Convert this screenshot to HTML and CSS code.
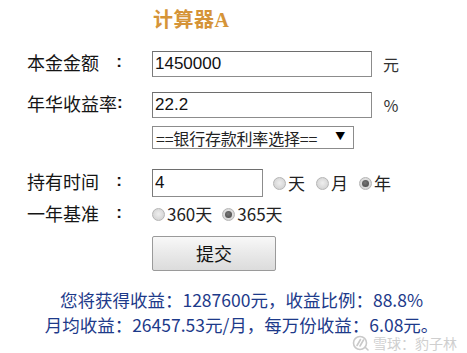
FILE: index.html
```html
<!DOCTYPE html>
<html lang="zh-CN">
<head>
<meta charset="utf-8">
<title>计算器A</title>
<link rel="stylesheet" href="styles.css">
</head>
<body>
<div class="page">
  <h1 class="title">计算器A</h1>
  <form class="form">
    <div class="row row-principal">
      <div class="label"><span class="label-text">本金金额</span><span class="colon">:</span></div>
      <input class="input input-wide" type="text" value="1450000">
      <span class="unit">元</span>
    </div>
    <div class="row row-rate">
      <div class="label"><span class="label-text">年华收益率</span><span class="colon">:</span></div>
      <input class="input input-wide" type="text" value="22.2">
      <span class="unit">％</span>
    </div>
    <div class="row row-select">
      <div class="label"></div>
      <div class="select"><span>==银行存款利率选择==</span><span class="arrow">▼</span></div>
    </div>
    <div class="row row-time">
      <div class="label"><span class="label-text">持有时间</span><span class="colon">:</span></div>
      <input class="input input-short" type="text" value="4">
      <div class="radios">
        <label class="opt"><span class="radio"></span>天</label>
        <label class="opt"><span class="radio"></span>月</label>
        <label class="opt"><span class="radio on"></span>年</label>
      </div>
    </div>
    <div class="row row-base">
      <div class="label"><span class="label-text">一年基准</span><span class="colon">:</span></div>
      <div class="radios radios-base">
        <label class="opt"><span class="radio"></span>360天</label>
        <label class="opt"><span class="radio on"></span>365天</label>
      </div>
    </div>
    <div class="row row-submit">
      <div class="label"></div>
      <button class="button" type="button">提交</button>
    </div>
  </form>
  <div class="result">
    <p>您将获得收益：1287600元，收益比例：88.8%</p>
    <p>月均收益：26457.53元/月，每万份收益：6.08元。</p>
  </div>
  <div class="watermark">
    <svg width="18" height="16" viewBox="0 0 18 16" aria-hidden="true">
      <circle cx="8" cy="8" r="6.5" fill="none" stroke="#c9c9c9" stroke-width="1.6"/>
      <path d="M5 10.5 L8.5 4.5 M8 11 L11.5 5" stroke="#c9c9c9" stroke-width="1.6" fill="none" stroke-linecap="round"/>
      <path d="M13.5 12.5 L16 15" stroke="#c9c9c9" stroke-width="1.6" stroke-linecap="round"/>
    </svg>
    <span>雪球：豹子林</span>
  </div>
</div>
</body>
</html>
```

FILE: styles.css
```css
* { box-sizing: border-box; }

html, body {
  margin: 0;
  padding: 0;
  background: #ffffff;
}

.page {
  position: relative;
  width: 467px;
  height: 353px;
  overflow: hidden;
  font-family: "Noto Sans CJK SC", "Liberation Sans", sans-serif;
  color: #111;
}

.title {
  margin: 8px 0 0 153px;
  font-family: "Liberation Serif", "Noto Sans CJK SC", serif;
  font-weight: 700;
  font-size: 20px;
  line-height: 24px;
  color: #d59438;
  letter-spacing: 0.5px;
}

.form {
  margin: 19px 0 0 0;
  padding-left: 27px;
}

.row {
  display: flex;
  align-items: center;
}

.label {
  width: 98px;
  margin-right: 27px;
  flex-shrink: 0;
  display: flex;
  align-items: center;
  font-size: 18px;
  line-height: 20px;
  margin-bottom: 5px;
  color: #151515;
  white-space: nowrap;
}

.label-text {
  white-space: nowrap;
}

.colon {
  margin-left: auto;
  font-family: "Liberation Sans", sans-serif;
  font-weight: 700;
  font-size: 17px;
  padding-right: 3px;
}

.input {
  height: 26px;
  border: 1px solid #8c8c8c;
  border-top-color: #6e6e6e;
  border-left-color: #7a7a7a;
  padding: 0 2px;
  font-family: "Liberation Sans", sans-serif;
  font-size: 17px;
  color: #111;
  background: #fff;
  outline: none;
}

.input-wide { width: 220px; }
.input-short { width: 111px; height: 28px; }

.unit {
  margin-left: 11px;
  font-size: 16px;
  color: #333;
  line-height: 20px;
}

.row-rate { margin-top: 15px; }

.row-select { margin-top: 8px; }

.select {
  width: 202px;
  height: 23px;
  border: 1px solid #8c8c8c;
  display: flex;
  align-items: center;
  justify-content: space-between;
  padding: 0 8px 0 3px;
  font-size: 16px;
  line-height: 20px;
  color: #222;
  letter-spacing: -0.2px;
}

.arrow {
  font-size: 10px;
  color: #000;
  margin-bottom: 3px;
}

.row-time { margin-top: 20px; }

.radios {
  display: flex;
  align-items: center;
  gap: 11px;
  margin-left: 10px;
  font-size: 17px;
  line-height: 20px;
  color: #222;
}

.radios-base {
  margin-left: 0;
  gap: 10px;
  margin-bottom: 2px;
}

.opt {
  display: flex;
  align-items: center;
}

.radio {
  position: relative;
  width: 13px;
  height: 13px;
  border-radius: 50%;
  border: 1px solid #b5b5b5;
  background: radial-gradient(circle at 50% 45%, #eeeeee 0%, #d6d6d6 70%, #c8c8c8 100%);
  margin-right: 2px;
  flex-shrink: 0;
}

.radio.on::after {
  content: "";
  position: absolute;
  left: 2px;
  top: 2px;
  width: 7px;
  height: 7px;
  border-radius: 50%;
  background: radial-gradient(circle at 45% 40%, #777 0%, #444 100%);
}

.row-base {
  margin-top: 8px;
  height: 20px;
}

.row-submit { margin-top: 11px; }

.button {
  width: 124px;
  height: 35px;
  border: 1px solid #9a9a9a;
  border-radius: 2px;
  background: linear-gradient(#f8f8f8, #e9e9e9 50%, #dcdcdc);
  font-family: "Noto Sans CJK SC", sans-serif;
  font-size: 18px;
  color: #111;
  padding: 0 0 2px 0;
}

.result {
  margin-top: 16px;
  padding-left: 16px;
  text-align: center;
  font-family: "Noto Sans CJK TC", "Noto Sans CJK SC", sans-serif;
  color: #1d3a8a;
  font-size: 17.5px;
  line-height: 25px;
}

.result p {
  margin: 0;
  white-space: nowrap;
}

.watermark {
  position: absolute;
  right: 10px;
  bottom: 2px;
  display: flex;
  align-items: center;
  gap: 3px;
  font-size: 14px;
  line-height: 16px;
  color: #cfcfcf;
}
```
